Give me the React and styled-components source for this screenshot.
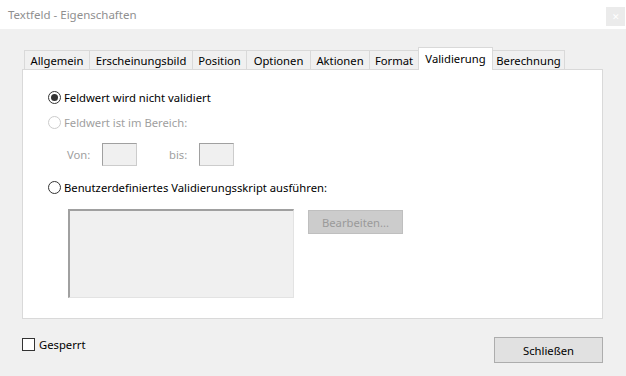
import React from "react";
import styled, { createGlobalStyle } from "styled-components";

const GlobalStyle = createGlobalStyle`
  html, body {
    margin: 0;
    padding: 0;
    background: #f0f0f0;
  }
  body {
    font-family: "Noto Sans", "Segoe UI", "Liberation Sans", sans-serif;
    font-size: 11.25px;
    color: #000;
  }
`;

const Window = styled.div`
  width: 626px;
  height: 376px;
  display: flex;
  flex-direction: column;
  background: #f0f0f0;
  overflow: hidden;
`;

const TitleBar = styled.div`
  height: 29px;
  flex: none;
  background: #fff;
  display: flex;
  align-items: flex-start;
  justify-content: space-between;
  padding-left: 8px;
  .title {
    margin-top: 6px;
    color: #8f8f8f;
    font-size: 11.5px;
    line-height: 17px;
  }
`;

const CloseButton = styled.div`
  width: 19px;
  height: 19px;
  margin-top: 7px;
  margin-right: 1px;
  background: #ebebeb;
  display: flex;
  align-items: center;
  justify-content: center;
  color: #fff;
  font-size: 9px;
  line-height: 1;
`;

const Body = styled.div`
  flex: 1;
  padding: 18px 23px 0 22px;
  display: flex;
  flex-direction: column;
`;

const TabList = styled.div`
  display: flex;
  align-items: flex-end;
  padding-left: 2px;
  height: 23px;
  position: relative;
  z-index: 1;
  margin-bottom: -1px;
`;

const Tab = styled.div`
  box-sizing: border-box;
  width: ${(p) => p.$w}px;
  height: ${(p) => (p.$active ? 23 : 20)}px;
  margin-right: -1px;
  border: 1px solid #d9d9d9;
  border-bottom: ${(p) => (p.$active ? "none" : "1px solid #d9d9d9")};
  background: ${(p) => (p.$active ? "#fff" : "#f0f0f0")};
  display: flex;
  align-items: ${(p) => (p.$active ? "flex-start" : "center")};
  justify-content: center;
  padding-top: ${(p) => (p.$active ? "2px" : "0")};
  line-height: 17px;
  white-space: nowrap;
  position: relative;
  z-index: ${(p) => (p.$active ? 2 : 1)};
`;

const Panel = styled.div`
  box-sizing: border-box;
  width: 581px;
  height: 250px;
  background: #fff;
  border: 1px solid #d9d9d9;
  padding: 17px 0 0 25px;
  display: flex;
  flex-direction: column;
`;

const Row = styled.div`
  display: flex;
  align-items: center;
  height: ${(p) => p.$h || 20}px;
  margin-top: ${(p) => p.$mt || 0}px;
  padding-left: ${(p) => p.$indent || 0}px;
  color: ${(p) => (p.$disabled ? "#a0a0a0" : "#000")};
  white-space: nowrap;
`;

const Radio = styled.span`
  box-sizing: border-box;
  width: 13px;
  height: 13px;
  border-radius: 50%;
  border: 1px solid ${(p) => (p.$disabled ? "#cccccc" : "#333")};
  background: #fff;
  margin-right: 3px;
  display: flex;
  align-items: center;
  justify-content: center;
  flex: none;
  &::after {
    content: "";
    display: ${(p) => (p.$checked ? "block" : "none")};
    width: 7px;
    height: 7px;
    border-radius: 50%;
    background: #333;
  }
`;

const SmallLabel = styled.span`
  color: #a0a0a0;
  width: ${(p) => p.$w}px;
`;

const SmallInput = styled.div`
  box-sizing: border-box;
  width: 35px;
  height: 23px;
  background: #f0f0f0;
  border: 1px solid #cccccc;
  border-top-color: #a0a0a0;
  border-left-color: #a0a0a0;
  margin-right: ${(p) => p.$mr || 0}px;
`;

const ScriptRow = styled.div`
  display: flex;
  align-items: flex-start;
  margin-top: 12px;
  padding-left: 20px;
  gap: 14px;
`;

const ScriptBox = styled.div`
  box-sizing: border-box;
  width: 226px;
  height: 89px;
  background: #f0f0f0;
  border: 1px solid #e3e3e3;
  border-top: 2px solid #a0a0a0;
  border-left: 2px solid #a0a0a0;
`;

const DisabledButton = styled.div`
  box-sizing: border-box;
  width: 95px;
  height: 24px;
  margin-top: 1px;
  background: #cccccc;
  border: 1px solid #bfbfbf;
  color: #9a9a9a;
  display: flex;
  align-items: center;
  justify-content: center;
`;

const Footer = styled.div`
  display: flex;
  justify-content: space-between;
  align-items: flex-start;
  padding-top: 19px;
`;

const CheckLabel = styled.label`
  display: flex;
  align-items: center;
  height: 13px;
  gap: 4px;
  white-space: nowrap;
`;

const CheckBox = styled.span`
  box-sizing: border-box;
  width: 13px;
  height: 13px;
  border: 1px solid #333;
  background: #fff;
`;

const Button = styled.div`
  box-sizing: border-box;
  width: 109px;
  height: 26px;
  margin-top: -1px;
  background: #e1e1e1;
  border: 1px solid #adadad;
  display: flex;
  align-items: center;
  justify-content: center;
`;

const tabs = [
  ["Allgemein", 66],
  ["Erscheinungsbild", 104],
  ["Position", 55],
  ["Optionen", 65],
  ["Aktionen", 60],
  ["Format", 50],
  ["Validierung", 75],
  ["Berechnung", 73],
];

export default function App() {
  return (
    <Window>
      <GlobalStyle />
      <TitleBar>
        <span className="title">Textfeld - Eigenschaften</span>
        <CloseButton>✕</CloseButton>
      </TitleBar>
      <Body>
        <TabList>
          {tabs.map(([label, w]) => (
            <Tab key={label} $w={w} $active={label === "Validierung"}>
              {label}
            </Tab>
          ))}
        </TabList>
        <Panel>
          <Row>
            <Radio $checked />
            Feldwert wird nicht validiert
          </Row>
          <Row $mt={5} $disabled>
            <Radio $disabled />
            Feldwert ist im Bereich:
          </Row>
          <Row $h={23} $mt={11} $indent={19}>
            <SmallLabel $w={35}>Von:</SmallLabel>
            <SmallInput $mr={32} />
            <SmallLabel $w={30}>bis:</SmallLabel>
            <SmallInput />
          </Row>
          <Row $mt={11}>
            <Radio />
            Benutzerdefiniertes Validierungsskript ausführen:
          </Row>
          <ScriptRow>
            <ScriptBox />
            <DisabledButton>Bearbeiten...</DisabledButton>
          </ScriptRow>
        </Panel>
        <Footer>
          <CheckLabel>
            <CheckBox />
            Gesperrt
          </CheckLabel>
          <Button>Schließen</Button>
        </Footer>
      </Body>
    </Window>
  );
}
